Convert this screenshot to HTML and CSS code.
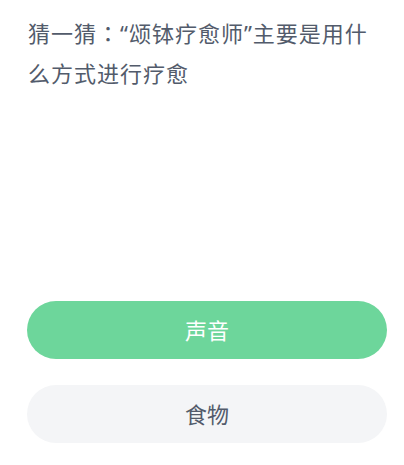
FILE: index.html
```html
<!DOCTYPE html>
<html lang="zh-CN">
<head>
  <meta charset="UTF-8">
  <meta name="viewport" content="width=device-width, initial-scale=1.0">
  <title>猜一猜</title>
  <link rel="stylesheet" href="styles.css">
</head>
<body>

  <div class="question">
    <p class="questionText">猜一猜<span class="colon" lang="zh-TW">：</span>“颂钵疗愈师”主要是用什么方式进行疗愈</p>
  </div>

  <div class="picture"></div>

  <div class="answers">
    <div class="answer answerRight">声音</div>
    <div class="answer">食物</div>
  </div>

</body>
</html>
```

FILE: styles.css
```css
body {
  margin: 0;
  background-color: #fff;
  font-family: "Noto Sans", "Noto Sans CJK SC", sans-serif;
}

.question {
  padding: 12px 25px 0 28px;
}

.questionText {
  margin: 0;
  font-size: 22px;
  line-height: 40px;
  letter-spacing: 1px;
  color: #525b6b;
}

.colon {
  font-family: "Noto Sans CJK TC", sans-serif;
}

.picture {
  height: 208px;
}

.answers {
  display: flex;
  flex-direction: column;
  gap: 26px;
  padding: 0 17px 0 27px;
}

.answer {
  height: 58px;
  border-radius: 29px;
  background-color: #f4f5f7;
  color: #525b6b;
  font-size: 22px;
  line-height: 58px;
  text-align: center;
}

.answerRight {
  background-color: #6dd69b;
  color: #fff;
}
```
